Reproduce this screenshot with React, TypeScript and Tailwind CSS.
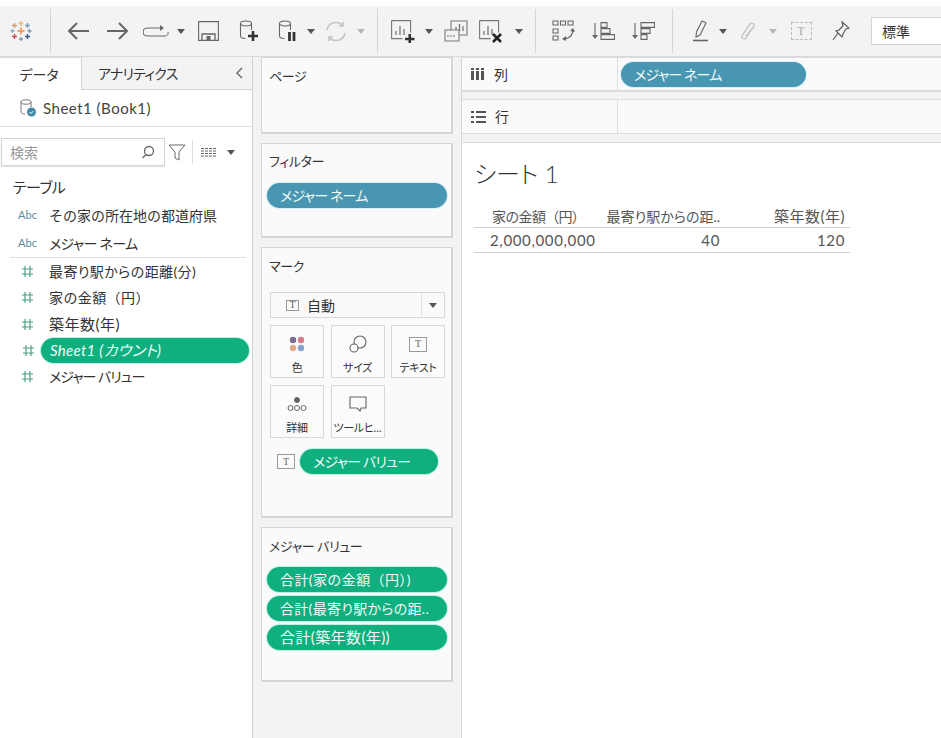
import type { ReactNode } from 'react'

// fullwidth parens and kanji keep their full set width, kana gets squeezed by palt
const wide = "[font-feature-settings:normal]"

function Caret({ light }: { light?: boolean }) {
  return (
    <svg width="8" height="5" viewBox="0 0 8 5">
      <path d="M0 0h8L4 5z" fill={light ? '#b5b5b5' : '#555'} />
    </svg>
  )
}

function Sep() {
  return <div className="h-[44px] w-px shrink-0 bg-[#d4d4d4]" />
}

function Slot({ w, children }: { w: number; children: ReactNode }) {
  return (
    <div className="flex shrink-0 items-center justify-center" style={{ width: w }}>
      {children}
    </div>
  )
}

function Logo() {
  const cross = (x: number, y: number, s: number, c: string, sw = 1.4) => (
    <path d={`M${x - s} ${y}h${s * 2}M${x} ${y - s}v${s * 2}`} stroke={c} strokeWidth={sw} fill="none" />
  )
  return (
    <svg width="22" height="22" viewBox="0 0 22 22">
      {cross(11, 11, 3.5, '#e8a06b', 1.8)}
      {cross(11, 3.5, 2.5, '#e9b87a')}
      {cross(17.5, 5.5, 2.5, '#7c9fb0')}
      {cross(4.5, 5.5, 2.5, '#d0a070')}
      {cross(19.5, 11, 2, '#7c9fb0')}
      {cross(2.5, 11, 2, '#8fb0c0')}
      {cross(4.5, 16.5, 2.5, '#c9485a')}
      {cross(17.5, 16.5, 2.5, '#3a5c8c')}
      {cross(11, 19, 2, '#7c9fb0')}
    </svg>
  )
}

function Db({ children }: { children?: ReactNode }) {
  return (
    <svg width="20" height="22" viewBox="0 0 20 22" fill="none">
      <ellipse cx="7" cy="3.500" rx="5.500" ry="2.500" stroke="#666" strokeWidth="1.100" />
      <path d="M1.500 3.500V16c0 1.500 2 2.500 5 2.500M12.500 3.500V10" stroke="#666" strokeWidth="1.100" />
      {children}
    </svg>
  )
}

function ChartBox({ children }: { children?: ReactNode }) {
  return (
    <svg width="24" height="23" viewBox="0 0 24 23" fill="none">
      <path d="M.6.6h19v12M.6.6v18h11" stroke="#777" strokeWidth="1.100" />
      <path d="M5 15v-4M9 15V6M13 15V9" stroke="#777" strokeWidth="1.300" />
      {children}
    </svg>
  )
}

function Toolbar() {
  return (
    <div className="flex h-[51px] shrink-0 items-center overflow-hidden border-b border-[#d9d9d9] bg-[#f3f3f3]">
      <Slot w={42}><Logo /></Slot>
      <div className="w-[8px] shrink-0" />
      <Sep />
      <div className="w-[7px] shrink-0" />
      <Slot w={40}>
        <svg width="22" height="20" viewBox="0 0 22 20" fill="none"><path d="M22 10H2M10 2l-8 8 8 8" stroke="#666" strokeWidth="2" /></svg>
      </Slot>
      <Slot w={40}>
        <svg width="22" height="20" viewBox="0 0 22 20" fill="none"><path d="M0 10h20M12 2l8 8-8 8" stroke="#666" strokeWidth="2" /></svg>
      </Slot>
      <Slot w={36}>
        <svg width="26" height="12" viewBox="0 0 26 12" fill="none"><path d="M19 3H4a4 4 0 0 0 0 8h18a3 3 0 0 0 3-4" stroke="#666" /><path d="M17 0l4 3-4 3z" fill="#666" /></svg>
      </Slot>
      <Slot w={14}><Caret /></Slot>
      <Slot w={40}>
        <svg width="21" height="20" viewBox="0 0 21 20" fill="none"><path d="M.6.6h19.800v18.800H.6z" stroke="#666" strokeWidth="1.100" /><path d="M4 19v-6h13v6" stroke="#666" strokeWidth="1.300" /><path d="M8.500 15h4v4h-4z" fill="#666" /></svg>
      </Slot>
      <Slot w={41}>
        <Db><path d="M9 16h10M14 11v10" stroke="#333" strokeWidth="2.600" /></Db>
      </Slot>
      <Slot w={38}>
        <Db><path d="M11.500 12v9M16 12v9" stroke="#333" strokeWidth="2.800" /></Db>
      </Slot>
      <Slot w={8}><Caret /></Slot>
      <div className="w-px shrink-0" />
      <Slot w={40}>
        <svg width="22" height="21" viewBox="0 0 22 21" fill="none" stroke="#c4c4c4" strokeWidth="1.600"><path d="M2 9a9 9 0 0 1 16-4M20 12a9 9 0 0 1-16 4" /><path d="M18 1v4h-4M4 20v-4h4" /></svg>
      </Slot>
      <Slot w={10}><Caret light /></Slot>
      <div className="w-[11px] shrink-0" />
      <Sep />
      <div className="w-[5px] shrink-0" />
      <Slot w={40}>
        <ChartBox><path d="M14 19h9.500M18.750 14v9" stroke="#333" strokeWidth="2.600" /></ChartBox>
      </Slot>
      <Slot w={12}><Caret /></Slot>
      <Slot w={42}>
        <svg width="24" height="24" viewBox="0 0 24 24" fill="none" stroke="#777" strokeWidth="1.100"><path d="M7 2h16v14H7z" /><path d="M12 12V8M15.500 12V5M19 12V7" strokeWidth="1.300" /><path d="M1 11h14v11H1zM4 18v-2M7 18v-2M10 18v-2" fill="#f3f3f3" /></svg>
      </Slot>
      <Slot w={28}>
        <ChartBox><path d="M14 14l8 8M22 14l-8 8" stroke="#222" strokeWidth="2.600" /></ChartBox>
      </Slot>
      <Slot w={28}><Caret /></Slot>
      <div className="w-[2px] shrink-0" />
      <Sep />
      <div className="w-[7px] shrink-0" />
      <Slot w={40}>
        <svg width="23" height="22" viewBox="0 0 23 22" fill="none" stroke="#666" strokeWidth="1.100"><path d="M1 1h5v4H1zM8.500 1h5v4h-5zM16 1h5v4h-5zM1 9h5v4H1zM1 16h5v4H1z" /><path d="M21 9c0 5-3 9-8 10" strokeWidth="1.300" /><path d="M18 11l3-3 2 4zM14 16l-4 3 4 2z" fill="#666" stroke="none" /></svg>
      </Slot>
      <Slot w={40}>
        <svg width="23" height="18" viewBox="0 0 23 18" fill="none" stroke="#666" strokeWidth="1.100"><path d="M3 1v14" /><path d="M0 13l3 4 3-4z" fill="#666" stroke="none" /><path d="M9 .6h6v4.800H9zM9 6.600h9v4.800H9zM9 12.600h13.500v4.800H9z" /></svg>
      </Slot>
      <Slot w={40}>
        <svg width="23" height="18" viewBox="0 0 23 18" fill="none" stroke="#666" strokeWidth="1.100"><path d="M3 1v14" /><path d="M0 13l3 4 3-4z" fill="#666" stroke="none" /><path d="M9 .6h13.500v4.800H9zM9 6.600h9v4.800H9zM9 12.600h6v4.800H9z" /></svg>
      </Slot>
      <div className="w-[9px] shrink-0" />
      <Sep />
      <div className="w-[10px] shrink-0" />
      <Slot w={36}>
        <svg width="16" height="22" viewBox="0 0 16 22" fill="none" stroke="#666" strokeWidth="1.100"><path d="M9 1l4 2-6 12-4 2 .5-5z" /><path d="M0 20.500h15" strokeWidth="1.600" /></svg>
      </Slot>
      <Slot w={8}><Caret /></Slot>
      <Slot w={42}>
        <svg width="16" height="21" viewBox="0 0 16 21" fill="none" stroke="#c0c0c0" strokeWidth="1.300"><path d="M13 6l-7 11c-1.500 2-5 0-4-2l8-12c1.500-2 5 0 4 2.500L6 15" /></svg>
      </Slot>
      <Slot w={8}><Caret light /></Slot>
      <Slot w={48}>
        <div className="flex h-[18px] w-[21px] items-center justify-center border border-dashed border-[#bbb] font-['Liberation_Serif',serif] text-[12px] text-[#aaa]">T</div>
      </Slot>
      <Slot w={32}>
        <svg width="18" height="20" viewBox="0 0 18 20" fill="none" stroke="#555" strokeWidth="1.100"><path d="M10 1l7 6-3 1-3 5-1 3-6-6 3-1 4-4zM6 12l-5 7" /></svg>
      </Slot>
      <div className="ml-[14px] flex h-[28px] w-[80px] shrink-0 items-center border border-[#d4d4d4] bg-white pl-[10px]">
        <span className="text-[14px] text-[#333]">標準</span>
      </div>
    </div>
  )
}

function Pill({ color, italic, className = '', children }: { color: 'green' | 'blue'; italic?: boolean; className?: string; children: ReactNode }) {
  return (
    <div
      className={`flex h-[25px] items-center rounded-full whitespace-nowrap text-[#f2fbf8] ${italic ? 'italic' : ''} ${
        color === 'green' ? 'bg-[#0faf80] shadow-[0_0_0_1px_#bff2e4]' : 'bg-[#4996b2] shadow-[0_0_0_1px_#d5f0f8]'
      } ${className}`}
    >
      {children}
    </div>
  )
}

function Hash() {
  return (
    <svg width="13" height="13" viewBox="0 0 13 13" fill="none" stroke="#4fa088" strokeWidth="1.200">
      <path d="M4 1v11M9 1v11M1 4h11M1 9h11" />
    </svg>
  )
}

function FieldRow({ kind, h, className = 'text-[14px]', children }: { kind: 'abc' | 'num'; h: number; className?: string; children: ReactNode }) {
  return (
    <div className="flex items-center" style={{ height: h }}>
      <div className="flex w-[49px] shrink-0 justify-center pl-[6px]">
        {kind === 'abc' ? <span className="text-[11px] text-[#5a8a9c]">Abc</span> : <Hash />}
      </div>
      <div className={`text-[#333] ${className}`}>{children}</div>
    </div>
  )
}

function DataPane() {
  return (
    <div className="flex w-[253px] shrink-0 flex-col border-r border-[#d0d0d0] bg-white">
      <div className="flex h-[33px] items-stretch">
        <div className="flex w-[81px] items-center justify-center border-t border-[#dcdcdc] pr-[3px] text-[14px] text-[#333]">データ</div>
        <div className="flex flex-1 items-center justify-between border-b border-l border-[#d4d4d4] bg-[#f3f3f3] pr-[9px] pl-[16px] text-[14px] tracking-[-0.8px] text-[#333]">
          <span>アナリティクス</span>
          <svg width="8" height="12" viewBox="0 0 8 12" fill="none" stroke="#666" strokeWidth="1.400"><path d="M7 1L2 6l5 5" /></svg>
        </div>
      </div>
      <div className="flex h-[37px] items-center border-b border-[#e2e2e2] pl-[19px]">
        <svg width="18" height="20" viewBox="0 0 18 20" fill="none">
          <ellipse cx="7" cy="4" rx="5" ry="2.200" stroke="#777" />
          <path d="M2 4v10c0 1 2 2 4 2M12 4v5" stroke="#777" />
          <circle cx="12.500" cy="14" r="4.500" fill="#3f8aa8" />
          <path d="M10.500 14l1.500 1.500 2.500-2.500" stroke="#fff" />
        </svg>
        <span className="ml-[6px] text-[15px] tracking-[0.5px] text-[#444]">Sheet1 (Book1)</span>
      </div>
      <div className="flex items-center pt-[11px] pl-[1px]">
        <div className="flex h-[28px] w-[164px] items-center justify-between border border-[#d4d4d4] pr-[9px] pl-[8px] shadow-[0_1px_1px_#e5e5e5]">
          <span className="text-[14px] text-[#999]">検索</span>
          <svg width="14" height="14" viewBox="0 0 14 14" fill="none" stroke="#666" strokeWidth="1.300"><circle cx="8" cy="6" r="4.500" /><path d="M5 9.500L1.500 13" /></svg>
        </div>
        <svg className="ml-[3px]" width="18" height="17" viewBox="0 0 18 17" fill="none" stroke="#666"><path d="M1 1h16l-6 7v8l-4-2V8z" /></svg>
        <div className="ml-[6px] h-[24px] w-px bg-[#dedede]" />
        <svg className="ml-[8px]" width="16" height="11" viewBox="0 0 16 11" stroke="#666" strokeDasharray="3 1">
          <path d="M0 1.500h16M0 4h16M0 6.500h16M0 9h16" />
        </svg>
        <div className="ml-[10px]"><Caret /></div>
      </div>
      <div className="pt-[9px] pl-[13px] text-[15px] leading-[25px] tracking-[-0.6px] text-[#333]">テーブル</div>
      <div className="pt-[1px]">
        <FieldRow kind="abc" h={28} className={`text-[14px] ${wide}`}>その家の所在地の都道府県</FieldRow>
        <FieldRow kind="abc" h={28} className="text-[14px] tracking-[-0.7px]">メジャー ネーム</FieldRow>
      </div>
      <div className="mr-[6px] ml-[10px] h-px bg-[#e0e0e0]" />
      <div>
        <FieldRow kind="num" h={26} className="text-[14px] tracking-[0.4px]">最寄り駅からの距離(分)</FieldRow>
        <FieldRow kind="num" h={27} className={`text-[14px] tracking-[0.4px] ${wide}`}>家の金額（円）</FieldRow>
        <FieldRow kind="num" h={26} className="text-[15px] tracking-[0.5px]">築年数(年)</FieldRow>
        <div className="flex h-[26px] items-center">
          <div className="flex w-[41px] shrink-0 justify-center pl-[16px]"><Hash /></div>
          <Pill color="green" italic className="w-[208px] pl-[9px] text-[15px] tracking-[0.3px]">Sheet1 (カウント)</Pill>
        </div>
        <FieldRow kind="num" h={27} className="text-[14px] tracking-[-1px]">メジャー バリュー</FieldRow>
      </div>
    </div>
  )
}

function Card({ h, title, className = 'pt-[8px]', children }: { h: number; title: string; className?: string; children?: ReactNode }) {
  return (
    <div className="w-[192px] shrink-0 border border-r-2 border-b-2 border-[#d6d6d6] bg-[#fafafa] px-[5px]" style={{ height: h }}>
      <div className={`pl-[2px] text-[13px] leading-[20px] tracking-[-0.4px] text-[#333] ${className}`}>{title}</div>
      {children}
    </div>
  )
}

function MarkBtn({ label, icon }: { label: string; icon: ReactNode }) {
  return (
    <div className="flex h-[53px] w-[54px] flex-col items-center border border-[#d8d8d8] bg-[#fbfbfb] pt-[8px]">
      <div className="flex h-[20px] items-center">{icon}</div>
      <span className="mt-[6px] text-[11px] leading-[16px] tracking-[-0.3px] whitespace-nowrap text-[#333]">{label}</span>
    </div>
  )
}

function TIcon({ w = 18, h = 15 }: { w?: number; h?: number }) {
  return (
    <div className="flex items-center justify-center border border-[#999] font-['Liberation_Serif',serif] text-[10px] leading-none text-[#666]" style={{ width: w, height: h }}>
      T
    </div>
  )
}

function MiddleColumn() {
  return (
    <div className="flex w-[209px] shrink-0 flex-col gap-[9px] border-r border-[#d6d6d6] bg-[#f3f3f3] pl-[8px]">
      <Card h={77} title="ページ" />
      <Card h={95} title="フィルター" className="pt-[7px]">
        <Pill color="blue" className="mt-[12px] w-[180px] pl-[13px] text-[14px] tracking-[-0.8px]">メジャー ネーム</Pill>
      </Card>
      <Card h={271} title="マーク">
        <div className="mt-[16px] ml-[3px] flex h-[26px] w-[175px] items-center border border-[#d8d8d8]">
          <div className="ml-[15px]"><TIcon w={13} h={11} /></div>
          <span className="ml-[8px] text-[14px] text-[#333]">自動</span>
          <div className="ml-auto flex h-full w-[23px] items-center justify-center border-l border-[#e2e2e2]"><Caret /></div>
        </div>
        <div className="mt-[7px] ml-[3px] grid w-[175px] grid-cols-[54px_54px_54px] gap-x-[6.500px] gap-y-[7px]">
          <MarkBtn
            label="色"
            icon={
              <svg width="16" height="16" viewBox="0 0 16 16">
                <circle cx="4" cy="4" r="3.200" fill="#7b6b94" />
                <circle cx="12" cy="4" r="3.200" fill="#d57a8b" />
                <circle cx="4" cy="12" r="3.200" fill="#e0a98a" />
                <circle cx="12" cy="12" r="3.200" fill="#87a3c9" />
              </svg>
            }
          />
          <MarkBtn
            label="サイズ"
            icon={
              <svg width="18" height="18" viewBox="0 0 18 18" fill="none" stroke="#666" strokeWidth="1.100"><circle cx="11" cy="7" r="6" /><circle cx="5" cy="13" r="4" fill="#fbfbfb" /></svg>
            }
          />
          <MarkBtn label="テキスト" icon={<TIcon />} />
          <MarkBtn
            label="詳細"
            icon={
              <svg width="20" height="16" viewBox="0 0 20 16" fill="none" stroke="#666">
                <circle cx="10" cy="4" r="2.500" fill="#666" />
                <circle cx="3.500" cy="12" r="2.500" />
                <circle cx="10" cy="12" r="2.500" />
                <circle cx="16.500" cy="12" r="2.500" />
              </svg>
            }
          />
          <MarkBtn
            label="ツールヒ…"
            icon={
              <svg width="18" height="17" viewBox="0 0 18 17" fill="none" stroke="#666" strokeWidth="1.100"><path d="M1 1h16v11h-5l-1 3-3-3H1z" /></svg>
            }
          />
        </div>
        <div className="mt-[11px] flex items-center pl-[10px]">
          <TIcon />
          <Pill color="green" className="ml-[5px] w-[138px] pl-[13px] text-[14px] tracking-[-0.8px]">メジャー バリュー</Pill>
        </div>
      </Card>
      <Card h={155} title="メジャー バリュー">
        <div className="mt-[11px] flex flex-col gap-[4px]">
          <Pill color="green" className={`w-[180px] pl-[13px] text-[14px] tracking-[0.4px] ${wide}`}>合計(家の金額（円）)</Pill>
          <Pill color="green" className="w-[180px] pl-[13px] text-[14px] tracking-[0.3px]">合計(最寄り駅からの距..</Pill>
          <Pill color="green" className={`w-[180px] pl-[13px] text-[15px] tracking-[0.4px] ${wide}`}>合計(築年数(年))</Pill>
        </div>
      </Card>
    </div>
  )
}

function ShelfRow({ h, label, thick, icon, children }: { h: number; label: string; thick?: boolean; icon: ReactNode; children?: ReactNode }) {
  return (
    <div className={`flex items-stretch border-y border-[#dcdcdc] bg-[#fafafa] ${thick ? 'border-b-2' : ''}`} style={{ height: h }}>
      <div className="flex w-[156px] shrink-0 items-center border-r border-[#dcdcdc] pl-[9px]">
        {icon}
        <span className="ml-[9px] text-[14px] text-[#333]">{label}</span>
      </div>
      <div className="flex flex-1 items-center pl-[3px]">{children}</div>
    </div>
  )
}

function MainArea() {
  return (
    <div className="flex min-w-0 flex-1 flex-col bg-[#f3f3f3]">
      <ShelfRow
        h={35}
        thick
        label="列"
        icon={
          <svg width="14" height="12" viewBox="0 0 14 12" fill="#555"><path d="M0 0h3v2H0zM0 3h3v9H0zM5 0h3v2H5zM5 3h3v9H5zM10 0h3v2h-3zM10 3h3v9h-3z" /></svg>
        }
      >
        <Pill color="blue" className="w-[185px] pl-[13px] text-[14px] tracking-[-0.8px]">メジャー ネーム</Pill>
      </ShelfRow>
      <div className="mt-[7px]">
        <ShelfRow
          h={35}
          label="行"
          icon={
            <svg width="15" height="12" viewBox="0 0 15 12" fill="#555"><path d="M0 0h3v2H0zM5 0h10v2H5zM0 5h3v2H0zM5 5h10v2H5zM0 10h3v2H0zM5 10h10v2H5z" /></svg>
          }
        />
      </div>
      <div className="mt-[8px] flex-1 border-t border-[#dcdcdc] bg-white pt-[15px] pl-[12px]">
        <div className="text-[24px] leading-[32px] font-light text-[#333]">シート 1</div>
        <div className="mt-[16px] w-[376px] text-[14px] text-[#555]">
          <div className="grid h-[22px] grid-cols-[125px_121px_125px] items-start border-b border-[#cfcfcf] pr-[5px]">
            <span className={`pl-[18px] tracking-[-0.7px] whitespace-nowrap ${wide}`}>家の金額（円）</span>
            <span className="text-right whitespace-nowrap">最寄り駅からの距..</span>
            <span className="text-right text-[15px] leading-[20px] tracking-[0.5px] whitespace-nowrap">築年数(年)</span>
          </div>
          <div className="grid h-[25px] grid-cols-[125px_121px_125px] items-center border-b border-[#cfcfcf] pr-[5px] text-[15px] tracking-[0.65px]">
            <span className="pl-[16px]">2,000,000,000</span>
            <span className="text-right">40</span>
            <span className="text-right">120</span>
          </div>
        </div>
      </div>
    </div>
  )
}

export default function App() {
  return (
    <div className="flex h-[738px] w-[941px] flex-col overflow-hidden bg-white pt-[6px] font-['Lato','Noto_Sans_CJK_JP',sans-serif] [font-feature-settings:'palt']">
      <Toolbar />
      <div className="flex min-h-0 flex-1">
        <DataPane />
        <MiddleColumn />
        <MainArea />
      </div>
    </div>
  )
}
